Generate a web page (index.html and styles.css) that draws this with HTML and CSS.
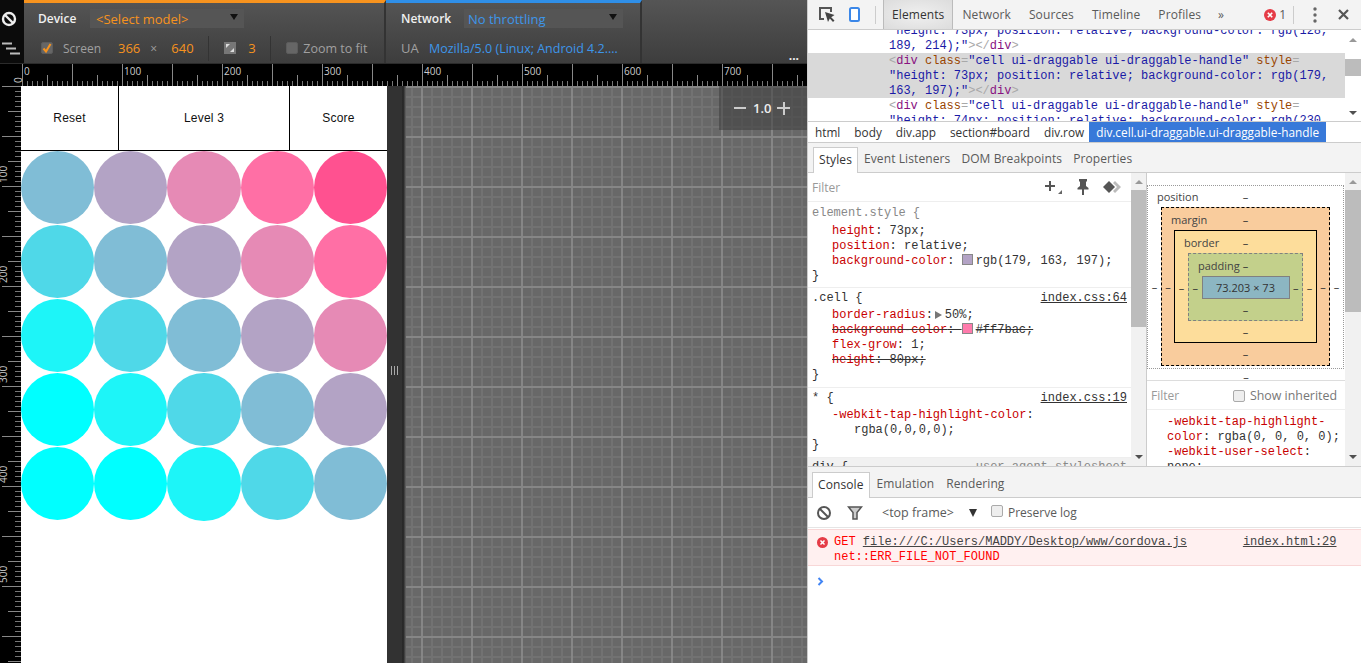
FILE: index.html
```html
<!DOCTYPE html>
<html lang="en">
<head>
    <meta charset="UTF-8">
    <title>DevTools device mode</title>
    <link rel="stylesheet" href="styles.css">
</head>
<body>
<div class="app">
    <div class="emulator">
        <div class="emu-toolbar">
            <div class="emu-side">
                <svg class="ban" width="16" height="16" viewBox="0 0 16 16"><circle cx="8" cy="8" r="6" fill="none" stroke="#eee" stroke-width="2.4"/><path d="M4 4l8 8" stroke="#eee" stroke-width="2.4"/></svg>
                <svg class="steps" width="20" height="14" viewBox="0 0 20 14"><path d="M1 1.500h10M5 6.500h10M9 11.500h10" stroke="#bbb" stroke-width="2" fill="none"/></svg>
            </div>
            <div class="emu-section device">
                <div class="emu-row top">
                    <span class="emu-label">Device</span>
                    <div class="emu-select model"><span>&lt;Select model&gt;</span><i class="arrow"></i></div>
                </div>
                <div class="emu-row">
                    <span class="check on"><svg width="12" height="12" viewBox="0 0 12 12"><path d="M2.500 6.500l2.500 3 4.500-7.500" fill="none" stroke="#f7931e" stroke-width="2"/></svg></span>
                    <span class="dim screen-label">Screen</span>
                    <span class="orange screen-w">366</span>
                    <span class="dim times">&times;</span>
                    <span class="orange screen-h">640</span>
                    <span class="vsep first"></span>
                    <svg class="dpr" width="12" height="12" viewBox="0 0 12 12"><rect width="12" height="12" fill="#777"/><path d="M2 2h4l-4 4zM10 10h-4l4-4z" fill="#ddd"/></svg>
                    <span class="orange dpr-val">3</span>
                    <span class="vsep"></span>
                    <span class="check"></span>
                    <span class="dim fit">Zoom to fit</span>
                </div>
            </div>
            <div class="emu-section network">
                <div class="emu-row top">
                    <span class="emu-label">Network</span>
                    <div class="emu-select throttle"><span>No throttling</span><i class="arrow"></i></div>
                </div>
                <div class="emu-row">
                    <span class="dim ua">UA</span>
                    <span class="blue">Mozilla/5.0 (Linux; Android 4.2....</span>
                </div>
            </div>
            <div class="emu-rest"><span class="more">...</span></div>
        </div>

        <div class="hruler">
            <b class="corner-zero">0</b>
            <span>0</span><span>100</span><span>200</span><span>300</span><span>400</span><span>500</span><span>600</span><span>700</span>
        </div>

        <div class="stage">
            <div class="vruler">
                <span>100</span><span>200</span><span>300</span><span>400</span><span>500</span>
            </div>
            <div class="screen">
                <div class="game-head">
                    <div class="head-btn">Reset</div>
                    <div class="head-level">Level 3</div>
                    <div class="head-btn">Score</div>
                </div>
                <section class="board">
                    <div class="row"><div class="cell a"></div><div class="cell b"></div><div class="cell c"></div><div class="cell d"></div><div class="cell e"></div></div>
                    <div class="row"><div class="cell f"></div><div class="cell a"></div><div class="cell b"></div><div class="cell c"></div><div class="cell d"></div></div>
                    <div class="row"><div class="cell g"></div><div class="cell f"></div><div class="cell a"></div><div class="cell b"></div><div class="cell c"></div></div>
                    <div class="row"><div class="cell h"></div><div class="cell g"></div><div class="cell f"></div><div class="cell a"></div><div class="cell b"></div></div>
                    <div class="row"><div class="cell h"></div><div class="cell h"></div><div class="cell g tall"></div><div class="cell f"></div><div class="cell a"></div></div>
                </section>
            </div>
            <div class="resizer"><span class="grip"></span></div>
            <div class="canvas-grid">
                <div class="zoom-box">
                    <span class="zoom-minus"></span>
                    <span class="zoom-val">1.0</span>
                    <span class="zoom-plus"></span>
                </div>
            </div>
        </div>
    </div>

    <div class="devtools">
        <div class="main-tabs">
            <svg class="tb-inspect" width="17" height="17" viewBox="0 0 17 17"><path d="M6 13H2V2h11v4" fill="none" stroke="#555" stroke-width="2"/><path d="M7 6l3 10 1.800-3.500L15 16l1.500-1.500-3.300-3.200L16.500 9z" fill="#444"/></svg>
            <svg class="tb-device" width="11" height="15" viewBox="0 0 11 15"><rect x="1" y="1" width="9" height="13" rx="1.500" fill="#fff" stroke="#3b87e8" stroke-width="2"/></svg>
            <span class="tb-sep"></span>
            <span class="tab active">Elements</span>
            <span class="tab">Network</span>
            <span class="tab">Sources</span>
            <span class="tab">Timeline</span>
            <span class="tab">Profiles</span>
            <span class="tab more-tabs">&raquo;</span>
            <span class="err-count"><svg width="12" height="12" viewBox="0 0 12 12"><circle cx="6" cy="6" r="6" fill="#e53c47"/><path d="M3.800 3.800l4.400 4.400M8.200 3.800l-4.400 4.400" stroke="#fff" stroke-width="1.600"/></svg>1</span>
            <span class="tb-sep right"></span>
            <svg class="tb-dots" width="4" height="16" viewBox="0 0 4 16"><circle cx="2" cy="2" r="1.700" fill="#666"/><circle cx="2" cy="8" r="1.700" fill="#666"/><circle cx="2" cy="14" r="1.700" fill="#666"/></svg>
            <svg class="tb-close" width="11" height="11" viewBox="0 0 11 11"><path d="M1 1l9 9M10 1l-9 9" stroke="#555" stroke-width="2.200"/></svg>
        </div>

        <div class="tree-wrap">
            <div class="tree code">
                <div class="tl">"height: 73px; position: relative; background-color: rgb(128,</div>
                <div class="tl"><span class="val">189, 214);</span><span class="val">"</span><span class="br">&gt;&lt;/</span><span class="tag">div</span><span class="br">&gt;</span></div>
                <div class="selected">
                    <div class="tl"><span class="br">&lt;</span><span class="tag">div</span> <span class="att">class</span><span class="br">=</span><span class="val">"cell ui-draggable ui-draggable-handle"</span> <span class="att">style</span><span class="br">=</span></div>
                    <div class="tl"><span class="val">"height: 73px; position: relative; background-color: rgb(179,</span></div>
                    <div class="tl"><span class="val">163, 197);"</span><span class="br">&gt;&lt;/</span><span class="tag">div</span><span class="br">&gt;</span></div>
                </div>
                <div class="tl"><span class="br">&lt;</span><span class="tag">div</span> <span class="att">class</span><span class="br">=</span><span class="val">"cell ui-draggable ui-draggable-handle"</span> <span class="att">style</span><span class="br">=</span></div>
                <div class="tl"><span class="val">"height: 74px; position: relative; background-color: rgb(230,</span></div>
            </div>
            <div class="sb tree-sb"><i class="up"></i><b class="thumb"></b><i class="down"></i></div>
        </div>

        <div class="crumbs">
            <span>html</span><span>body</span><span>div.app</span><span>section#board</span><span>div.row</span><span class="crumb-on">div.cell.ui-draggable.ui-draggable-handle</span>
        </div>

        <div class="sub-tabs">
            <span class="subtab active">Styles</span>
            <span class="subtab">Event Listeners</span>
            <span class="subtab">DOM Breakpoints</span>
            <span class="subtab">Properties</span>
        </div>

        <div class="styles-area">
            <div class="styles-pane">
                <div class="filter-row">
                    <span class="filter">Filter</span>
                    <span class="filter-icons">
                        <svg width="19" height="14" viewBox="0 0 19 14"><path d="M6 1v10M1 6h10" stroke="#555" stroke-width="2"/><path d="M18 10v4h-4z" fill="#666"/></svg>
                        <svg width="12" height="16" viewBox="0 0 12 16"><path d="M2 0h8v2l-1 1v4l2.500 2v1.500H7V16H5v-5.500H.5V9L3 7V3L2 2z" fill="#555"/></svg>
                        <svg width="18" height="12" viewBox="0 0 18 12"><path d="M12 0l6 6-6 6-2-2 4-4-4-4z" fill="#bbb"/><path d="M6 0l6 6-6 6-6-6z" fill="#555"/></svg>
                    </span>
                </div>
                <div class="rule first code">
                    <div class="sel dimsel">element.style {</div>
                    <div class="decl"><span class="prop">height</span>: 73px;</div>
                    <div class="decl"><span class="prop">position</span>: relative;</div>
                    <div class="decl"><span class="prop">background-color</span>: <i class="swatch purple"></i>rgb(179, 163, 197);</div>
                    <div>}</div>
                </div>
                <div class="rule code">
                    <div class="sel"><span>.cell {</span><u>index.css:64</u></div>
                    <div class="decl"><span class="prop">border-radius</span>:<i class="tri"></i>50%;</div>
                    <div class="decl"><s><span class="prop">background-color</span>: <i class="swatch pink"></i>#ff7bac;</s></div>
                    <div class="decl"><span class="prop">flex-grow</span>: 1;</div>
                    <div class="decl"><s><span class="prop">height</span>: 80px;</s></div>
                    <div>}</div>
                </div>
                <div class="rule code">
                    <div class="sel"><span>* {</span><u>index.css:19</u></div>
                    <div class="decl"><span class="prop">-webkit-tap-highlight-color</span>:</div>
                    <div class="decl wrapped">rgba(0,0,0,0);</div>
                    <div>}</div>
                </div>
                <div class="rule cut code">
                    <div class="sel"><span>div {</span><span class="ua-sheet">user agent stylesheet</span></div>
                </div>
            </div>
            <div class="sb styles-sb"><i class="up"></i><b class="thumb"></b><i class="down"></i></div>
            <div class="metrics-pane">
                <div class="metrics">
                    <div class="bx pos">
                        <div class="bx-top"><span class="bx-name">position</span><span>&ndash;</span></div>
                        <span class="side">&ndash;</span>
                        <div class="bx margin">
                            <div class="bx-top"><span class="bx-name">margin</span><span>&ndash;</span></div>
                            <span class="side">&ndash;</span>
                            <div class="bx border">
                                <div class="bx-top"><span class="bx-name">border</span><span>&ndash;</span></div>
                                <span class="side">&ndash;</span>
                                <div class="bx padding">
                                    <div class="bx-top"><span class="bx-name">padding</span><span>&ndash;</span></div>
                                    <span class="side">&ndash;</span>
                                    <div class="content-box">73.203 &times; 73</div>
                                    <span class="side">&ndash;</span>
                                    <div class="bx-bottom">&ndash;</div>
                                </div>
                                <span class="side">&ndash;</span>
                                <div class="bx-bottom">&ndash;</div>
                            </div>
                            <span class="side">&ndash;</span>
                            <div class="bx-bottom">&ndash;</div>
                        </div>
                        <span class="side">&ndash;</span>
                        <div class="bx-bottom pos-gap"></div>
                    </div>
                    <div class="pos-bottom">&ndash;</div>
                </div>
                <div class="computed-filter">
                    <span class="filter">Filter</span>
                    <span class="inherit"><span class="check light"></span>Show inherited</span>
                </div>
                <div class="computed code">
                    <div><span class="prop">-webkit-tap-highlight-</span></div>
                    <div><span class="prop">color</span>: rgba(0, 0, 0, 0);</div>
                    <div><span class="prop">-webkit-user-select</span>:</div>
                    <div>none;</div>
                </div>
            </div>
            <div class="sb metrics-sb"><i class="up"></i><b class="thumb"></b><i class="down"></i></div>
        </div>

        <div class="console-tabs">
            <span class="subtab active">Console</span>
            <span class="subtab">Emulation</span>
            <span class="subtab">Rendering</span>
        </div>
        <div class="console-bar">
            <svg width="16" height="16" viewBox="0 0 16 16"><circle cx="8" cy="8" r="6" fill="none" stroke="#555" stroke-width="2"/><path d="M4 4l8 8" stroke="#555" stroke-width="2"/></svg>
            <svg class="funnel" width="16" height="14" viewBox="0 0 16 14"><path d="M1.500 1h13L10 6.500V13H6V6.500z" fill="#ccc" stroke="#555" stroke-width="1.500"/></svg>
            <span class="frame">&lt;top frame&gt;</span>
            <i class="arrow dark"></i>
            <span class="check light"></span>
            <span class="preserve">Preserve log</span>
        </div>
        <div class="console-error code">
            <svg width="11" height="11" viewBox="0 0 12 12"><circle cx="6" cy="6" r="6" fill="#e53c47"/><path d="M3.800 3.800l4.400 4.400M8.200 3.800l-4.400 4.400" stroke="#fff" stroke-width="1.600"/></svg>
            <div class="err-body">
                <div class="err-line"><span>GET <u class="err-url">file:///C:/Users/MADDY/Desktop/www/cordova.js</u></span><u class="err-src">index.html:29</u></div>
                <div>net::ERR_FILE_NOT_FOUND</div>
            </div>
        </div>
        <div class="console-prompt">
            <svg width="7" height="9" viewBox="0 0 7 9"><path d="M1.500 1l3.500 3.500L1.500 8" fill="none" stroke="#4285f4" stroke-width="2"/></svg>
        </div>
    </div>
</div>
</body>
</html>
```

FILE: styles.css
```css
* {
    box-sizing: border-box;
}

html, body {
    margin: 0;
    height: 100%;
    overflow: hidden;
}

body {
    font-family: "Open Sans", sans-serif;
    font-size: 12px;
}

.app {
    display: flex;
    width: 1361px;
    height: 663px;
}

.code {
    font-family: "Liberation Mono", monospace;
    font-size: 12px;
    line-height: 15px;
}

/* emulator toolbar */
.emulator {
    width: 807px;
    flex: none;
    display: flex;
    flex-direction: column;
    background: #666;
}

.emu-toolbar {
    display: flex;
    height: 64px;
    flex: none;
    background: linear-gradient(#555, #3d3d3d);
    border-bottom: 1px solid #2b2b2b;
    color: #ddd;
}

.emu-side {
    width: 24px;
    background: #0b0b0b;
    display: flex;
    flex-direction: column;
    align-items: flex-start;
}

.ban {
    margin: 11px 0 0 1px;
}

.steps {
    margin: 15px 0 0 1px;
}

.emu-section {
    border-top: 3px solid #f7931e;
    border-right: 2px solid #333;
    width: 362px;
    padding-left: 14px;
}

.emu-section.network {
    border-top-color: #2f8fe8;
    width: 256px;
    padding-left: 15px;
}

.emu-rest {
    flex: 1;
    display: flex;
    justify-content: flex-end;
    align-items: flex-end;
}

.more {
    color: #eee;
    font-weight: 700;
    line-height: 14px;
    margin-right: 8px;
}

.emu-row {
    display: flex;
    align-items: center;
    height: 20px;
    margin-top: 10px;
    white-space: nowrap;
}

.emu-row.top {
    height: 19px;
    margin-top: 6px;
}

.emu-label {
    color: #f0f0f0;
    font-weight: 600;
    width: 52px;
}

.network .emu-label {
    width: 63px;
}

.emu-select {
    display: flex;
    justify-content: space-between;
    align-items: center;
    height: 19px;
    background: #555;
    padding: 0 6px 0 6px;
    color: #f7931e;
    font-size: 13px;
}

.emu-select.model {
    width: 154px;
}

.emu-select.throttle {
    width: 159px;
    color: #3d96ea;
    padding-left: 4px;
}

.arrow {
    width: 0;
    height: 0;
    border-left: 4px solid transparent;
    border-right: 4px solid transparent;
    border-top: 6px solid #111;
    margin-bottom: 3px;
}

.check {
    width: 12px;
    height: 12px;
    border-radius: 2px;
    background: #666;
    border: 1px solid #5c5c5c;
    display: inline-block;
    margin-left: 3px;
}

.check.on {
    display: flex;
}

.check svg {
    margin: -1px;
}

.dim {
    color: #a0a0a0;
}

.orange {
    color: #f7931e;
    font-size: 13px;
}

.screen-label {
    margin-left: 10px;
    width: 55px;
}

.screen-h {
    width: 21px;
}

.times {
    margin-left: 10px;
    width: 21px;
}

.vsep {
    width: 1px;
    height: 25px;
    background: #333;
    margin: 0 12px;
}

.vsep.first {
    margin-left: 16px;
    margin-right: 15px;
}

.dpr-val {
    margin-left: 12px;
    width: 10px;
}

.fit {
    margin-left: 5px;
    font-size: 12.500px;
}

.ua {
    width: 28px;
    font-size: 13px;
}

.blue {
    color: #3d96ea;
    font-size: 12.500px;
}

/* rulers */
.hruler {
    height: 22px;
    flex: none;
    display: flex;
    background-color: #000;
    background-image:
        linear-gradient(90deg, #888 1px, transparent 1px),
        linear-gradient(90deg, #888 1px, transparent 1px),
        linear-gradient(90deg, #777 1px, transparent 1px);
    background-size: 50px 100%, 25px 11px, 5px 5px;
    background-position: 22px 0, 22px 100%, 22px 100%;
    background-repeat: repeat-x;
    overflow: hidden;
}

.corner-zero {
    flex: 0 0 22px;
    background: #000;
    color: #ccc;
    font-size: 10px;
    font-weight: 400;
    line-height: 7px;
    height: 22px;
    writing-mode: vertical-rl;
    transform: rotate(180deg);
    padding: 3px 15px 0 0;
}

.hruler span {
    flex: 0 0 100px;
    color: #ccc;
    font-size: 10px;
    line-height: 14px;
    padding-left: 2px;
}

.stage {
    flex: 1;
    display: flex;
    min-height: 0;
}

.vruler {
    width: 21px;
    flex: none;
    background-color: #000;
    background-image:
        linear-gradient(#888 1px, transparent 1px),
        linear-gradient(#888 1px, transparent 1px),
        linear-gradient(#777 1px, transparent 1px);
    background-size: 19px 50px, 13px 25px, 6px 5px;
    background-position: 100% 0, 100% 0, 100% 0;
    background-repeat: repeat-y;
    display: flex;
    flex-direction: column;
    align-items: flex-start;
    overflow: hidden;
}

.vruler span {
    flex: 0 0 100px;
    width: 7px;
    writing-mode: vertical-rl;
    transform: rotate(180deg);
    color: #ccc;
    font-size: 10px;
    line-height: 7px;
    padding-top: 3px;
    text-align: left;
}

/* the game */
.screen {
    width: 366px;
    flex: none;
    background: #fff;
    font-family: "Liberation Sans", sans-serif;
}

.game-head {
    display: flex;
    height: 65px;
    border-bottom: 1px solid #000;
    color: #111;
}

.game-head div {
    display: flex;
    align-items: center;
    justify-content: center;
    letter-spacing: .2px;
}

.head-btn {
    width: 97px;
}

.head-level {
    width: 172px;
    border-left: 1px solid #000;
    border-right: 1px solid #000;
}

.board {
    display: flex;
    flex-direction: column;
    gap: 1px;
}

.row {
    display: flex;
    height: 73px;
}

.cell {
    flex: 1 1 0;
    height: 73px;
    border-radius: 50%;
}

.cell.tall {
    height: 74px;
}

.cell.a { background: #80bdd6; }
.cell.b { background: #b3a3c5; }
.cell.c { background: #e68ab5; }
.cell.d { background: #ff6fa5; }
.cell.e { background: #ff5190; }
.cell.f { background: #4fd8e8; }
.cell.g { background: #1df5f8; }
.cell.h { background: #00ffff; }

.resizer {
    width: 19px;
    flex: none;
    background: linear-gradient(90deg, #323232 15px, #1f1f1f 16px, #4d4d4d 18px, #696969 19px);
    display: flex;
    align-items: center;
    padding: 0 0 1px 4px;
}

.grip {
    width: 8px;
    height: 9px;
    background: repeating-linear-gradient(90deg, #aaa 0 1px, transparent 1px 3px);
    margin-bottom: 7px;
}

.canvas-grid {
    flex: 1;
    position: relative;
    background-color: #686868;
    background-image:
        linear-gradient(90deg, #868686 2px, transparent 2px),
        linear-gradient(#868686 2px, transparent 2px),
        linear-gradient(90deg, #727272 2px, transparent 2px),
        linear-gradient(#727272 2px, transparent 2px);
    background-size: 50px 50px, 50px 50px, 10px 10px, 10px 10px;
    background-position: 15px 0, 0 0, 5px 0, 0 0;
}

.zoom-box {
    position: absolute;
    top: 0;
    right: 0;
    width: 88px;
    height: 44px;
    background: rgba(60, 60, 60, .55);
    display: flex;
    align-items: center;
    padding: 0 0 0 15px;
    color: #eee;
    font-weight: 600;
    font-size: 13px;
}

.zoom-minus {
    width: 12px;
    height: 2px;
    background: #ccc;
    margin-right: 7px;
}

.zoom-plus {
    width: 13px;
    height: 13px;
    margin-left: 6px;
    background:
        linear-gradient(#ccc, #ccc) center/100% 2px no-repeat,
        linear-gradient(#ccc, #ccc) center/2px 100% no-repeat;
}

/* devtools */
.devtools {
    width: 554px;
    flex: none;
    display: flex;
    flex-direction: column;
    background: #fff;
    color: #333;
    border-left: 1px solid #ccc;
}

.main-tabs {
    height: 30px;
    flex: none;
    display: flex;
    align-items: center;
    background: #f3f3f3;
    border-bottom: 1px solid #ccc;
    color: #5a5a5a;
    white-space: nowrap;
    padding-right: 12px;
}

.main-tabs svg {
    flex: none;
}

.tb-inspect {
    margin-left: 10px;
}

.tb-device {
    margin-left: 14px;
}

.tb-sep {
    width: 1px;
    height: 18px;
    background: #ccc;
    margin-left: 15px;
}

.tb-sep.right {
    margin-left: 7px;
}

.tab {
    padding: 0 9px;
    height: 29px;
    line-height: 29px;
    letter-spacing: .1px;
}

.tab.active {
    margin-left: 7px;
    padding: 0 8px;
    background: radial-gradient(ellipse at center, #f0f0f0, #dcdcdc);
    border-left: 1px solid #bbb;
    border-right: 1px solid #bbb;
    color: #333;
}

.more-tabs {
    margin-left: -1px;
}

.err-count {
    display: flex;
    align-items: center;
    gap: 3px;
    margin-left: auto;
}

.tb-dots {
    margin-left: 19px;
}

.tb-close {
    margin-left: 21px;
}

.tree-wrap {
    height: 92px;
    flex: none;
    display: flex;
    overflow: hidden;
    border-bottom: 1px solid #ccc;
}

.tree {
    flex: 1;
    margin-top: -7px;
    color: #1a1aa6;
    white-space: nowrap;
    overflow: hidden;
}

.tl {
    height: 15px;
    line-height: 14px;
    padding: 1px 0 0 81px;
}

.selected {
    background: #d9d9d9;
}

.br { color: #a8a8a8; }
.tag { color: #881280; }
.att { color: #994500; }
.val { color: #1a1aa6; }

.sb {
    width: 16px;
    flex: none;
    background: #f1f1f1;
    display: flex;
    flex-direction: column;
    align-items: center;
    padding: 7px 0;
}

.sb .thumb {
    width: 100%;
    flex: none;
    background: #bcbcbc;
}

.sb .up, .sb .down {
    flex: none;
    width: 0;
    height: 0;
    border-left: 4px solid transparent;
    border-right: 4px solid transparent;
}

.sb .up {
    border-bottom: 4px solid #999;
}

.sb .down {
    border-top: 4px solid #505050;
    margin-top: auto;
}

.tree-sb {
    background: #fff;
    padding: 8px 0 6px;
}

.tree-sb .thumb {
    height: 17px;
    margin-top: 17px;
}

.crumbs {
    height: 21px;
    flex: none;
    display: flex;
    align-items: center;
    background: #fff;
    border-bottom: 1px solid #ccc;
    padding-left: 7px;
    white-space: nowrap;
    font-size: 11.800px;
}

.crumbs span {
    margin-right: 14px;
}

.crumbs .crumb-on {
    height: 20px;
    line-height: 20px;
    background: #3879d9;
    color: #fff;
    padding: 0 7px;
    margin: 0 0 0 -9px;
}

.sub-tabs, .console-tabs {
    height: 30px;
    flex: none;
    display: flex;
    align-items: flex-end;
    background: #f3f3f3;
    border-bottom: 1px solid #ccc;
    padding-left: 5px;
    color: #5a5a5a;
    white-space: nowrap;
}

.console-tabs {
    height: 31px;
    padding-left: 4px;
}

.console-tabs .subtab {
    margin-right: 2px;
}

.subtab {
    height: 25px;
    line-height: 24px;
    padding: 0 5px;
    margin-right: 1px;
    letter-spacing: .1px;
}

.subtab.active {
    height: 26px;
    background: #fff;
    border: 1px solid #ccc;
    border-bottom: none;
    color: #333;
    margin-bottom: -1px;
}

.styles-area {
    height: 294px;
    flex: none;
    display: flex;
    overflow: hidden;
    border-bottom: 1px solid #ccc;
}

.styles-pane {
    width: 323px;
    flex: none;
    display: flex;
    flex-direction: column;
    overflow: hidden;
}

.filter-row {
    height: 28px;
    flex: none;
    display: flex;
    justify-content: space-between;
    align-items: center;
    padding: 0 10px 0 4px;
}

.filter {
    color: #999;
}

.filter-icons {
    display: flex;
    align-items: center;
    gap: 14px;
}

.rule {
    border-top: 1px solid #eee;
    padding: 5px 4px 4px;
    color: #333;
    white-space: nowrap;
    height: 100px;
    flex: none;
}

.rule.first {
    height: 86px;
    padding-top: 4px;
}

.rule:nth-child(3) {
    height: 100px;
    padding-top: 3px;
}

.rule:nth-child(4) {
    height: 70px;
    padding-top: 3px;
}

.rule.cut {
    flex: 1;
    height: auto;
    background: #f1f1f1;
    padding-top: 2px;
}

.sel {
    display: flex;
    justify-content: space-between;
    height: 17px;
}

.dimsel {
    color: #888;
    height: 18px;
}

.ua-sheet {
    color: #888;
}

.decl {
    padding-left: 20px;
}

.decl.wrapped {
    padding-left: 42px;
}

.prop {
    color: #c80000;
}

.swatch {
    display: inline-block;
    width: 11px;
    height: 11px;
    margin-right: 3px;
    border: 1px solid #888;
    vertical-align: -1px;
}

.swatch.purple { background: #b3a3c5; }
.swatch.pink { background: #ff7bac; }

.tri {
    display: inline-block;
    border-left: 7px solid #777;
    border-top: 4px solid transparent;
    border-bottom: 4px solid transparent;
    margin: 0 3px 0 2px;
    vertical-align: -1px;
}

.styles-sb {
    border-right: 1px solid #ccc;
}

.styles-sb .thumb {
    height: 137px;
    margin-top: 6px;
}

.metrics-pane {
    flex: 1;
    display: flex;
    flex-direction: column;
    min-width: 0;
}

.metrics {
    height: 208px;
    flex: none;
    padding-top: 12px;
    border-bottom: 1px solid #ddd;
    text-align: center;
    font-size: 11px;
    color: #333;
}

.bx {
    display: grid;
    grid-template-columns: 1fr auto 1fr;
    align-items: center;
    justify-items: center;
}

.bx-top {
    grid-column: 1 / -1;
    width: 100%;
    height: 22px;
    display: grid;
    grid-template-columns: 1fr auto 1fr;
    align-items: center;
}

.bx.pos > .bx-top {
    height: 21px;
}

.bx-name {
    text-align: left;
    padding-left: 9px;
    color: #444;
}

.bx-bottom {
    grid-column: 1 / -1;
    height: 22px;
    line-height: 22px;
}

.bx.pos {
    width: 197px;
    border: 1px dotted #999;
    height: 184px;
}

.bx-bottom.pos-gap {
    height: 3px;
}

.bx.margin {
    width: 169px;
    height: 159px;
    background: #f9cc9d;
    border: 1px dashed #000;
}

.bx.border {
    width: 143px;
    height: 113px;
    background: #fddd9b;
    border: 1px solid #000;
}

.bx.padding {
    width: 115px;
    height: 68px;
    background: #c3d08b;
    border: 1px dashed #808080;
}

.content-box {
    width: 88px;
    height: 23px;
    line-height: 21px;
    background: #8cb6c2;
    border: 1px solid #808080;
    color: #333;
    white-space: nowrap;
}

.pos-bottom {
    line-height: 15px;
}

.computed-filter {
    height: 29px;
    flex: none;
    display: flex;
    align-items: center;
    justify-content: space-between;
    border-bottom: 1px solid #eee;
    padding: 1px 8px 0 4px;
}

.inherit {
    display: flex;
    align-items: center;
    color: #777;
    gap: 5px;
    font-size: 12.400px;
}

.check.light {
    background: #eee;
    border: 1px solid #aaa;
    margin: 0;
}

.computed {
    padding: 5px 0 0 20px;
    white-space: nowrap;
}

.metrics-sb .thumb {
    height: 122px;
    margin-top: 6px;
}

.console-bar {
    height: 30px;
    flex: none;
    display: flex;
    align-items: center;
    border-bottom: 1px solid #e5e5e5;
    padding-left: 8px;
    color: #5a5a5a;
}

.funnel {
    margin-left: 15px;
}

.frame {
    margin-left: 19px;
    width: 87px;
    font-size: 12.500px;
}

.arrow.dark {
    border-top-color: #333;
    border-top-width: 8px;
    border-left-width: 4.500px;
    border-right-width: 4.500px;
    margin: 0;
}

.console-bar .check {
    margin: -3px 0 0 14px;
}

.preserve {
    margin-left: 5px;
}

.console-error {
    height: 37px;
    flex: none;
    display: flex;
    background: #fff0f0;
    border-top: 1px solid #f8d7d7;
    border-bottom: 1px solid #f8d7d7;
    color: #f00;
    padding: 5px 0 0 9px;
    margin-top: 1px;
}

.console-error svg {
    margin-top: 2px;
    flex: none;
}

.err-body {
    flex: 1;
    margin-left: 6px;
}

.err-line {
    display: flex;
}

.err-url {
    color: #444;
}

.err-src {
    color: #444;
    margin-left: 56px;
}

.console-prompt {
    padding: 7px 0 0 9px;
}
```
